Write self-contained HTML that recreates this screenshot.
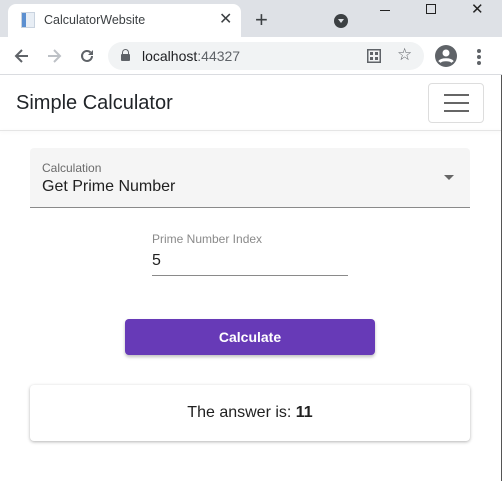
<!DOCTYPE html>
<html><head><style>
*{box-sizing:border-box;margin:0;padding:0}
body{width:502px;height:481px;overflow:hidden;background:#fff;font-family:"Liberation Sans",sans-serif;position:relative}
.a{position:absolute}
</style></head><body>
<div class="a" style="left:0;top:0;width:502px;height:37px;background:#dee1e6"></div>
<div class="a" style="left:8px;top:4px;width:233px;height:34px;background:#fff;border-radius:8px 8px 0 0"></div>
<div class="a" style="left:21px;top:12px;width:14px;height:16px;background:#e8eef5;border:1px solid #c9d3df"><div style="width:4px;height:14px;background:#5b8fd0"></div></div>
<div class="a" style="left:44px;top:13px;font-size:12.5px;color:#3c4043">CalculatorWebsite</div>
<div class="a" style="left:219px;top:9px;font-size:16px;color:#3c4043">✕</div>
<div class="a" style="left:255px;top:7px;font-size:22px;color:#3c4043">+</div>
<div class="a" style="left:334px;top:14px;width:14px;height:14px;border-radius:50%;background:#3c4043"></div>
<div class="a" style="left:338px;top:19px;width:0;height:0;border-left:3px solid transparent;border-right:3px solid transparent;border-top:4px solid #dee1e6"></div>
<div class="a" style="left:380px;top:10px;width:10px;height:1px;background:#222"></div>
<div class="a" style="left:426px;top:4px;width:10px;height:10px;border:1px solid #222"></div>
<div class="a" style="left:471px;top:0px;font-size:15px;color:#222">✕</div>
<div class="a" style="left:0;top:37px;width:502px;height:37px;background:#fff"></div>
<svg class="a" style="left:12px;top:46px" width="20" height="20" viewBox="0 0 20 20"><path d="M16 10H4M10 4L4 10l6 6" stroke="#5f6368" stroke-width="2" fill="none"/></svg>
<svg class="a" style="left:44px;top:46px" width="20" height="20" viewBox="0 0 20 20"><path d="M4 10h12M10 4l6 6-6 6" stroke="#bdc1c6" stroke-width="2" fill="none"/></svg>
<svg class="a" style="left:77px;top:46px" width="20" height="20" viewBox="0 0 20 20"><path d="M15 10a5 5 0 1 1-1.5-3.6" stroke="#5f6368" stroke-width="2" fill="none"/><path d="M16 4v5h-5z" fill="#5f6368"/></svg>
<div class="a" style="left:108px;top:42px;width:316px;height:28px;background:#f1f3f4;border-radius:14px"></div>
<div class="a" style="left:121px;top:54px;width:9px;height:7px;background:#5f6368;border-radius:1px"></div>
<div class="a" style="left:122px;top:49px;width:7px;height:7px;border:1.5px solid #5f6368;border-radius:4px 4px 0 0;border-bottom:none"></div>
<div class="a" style="left:142px;top:48px;font-size:14px;color:#202124">localhost<span style="color:#5f6368">:44327</span></div>
<svg class="a" style="left:367px;top:49px" width="14" height="14" viewBox="0 0 14 14"><rect x="0.75" y="0.75" width="12.5" height="12.5" fill="none" stroke="#5f6368" stroke-width="1.5"/><rect x="3" y="3" width="3" height="3" fill="#5f6368"/><rect x="8" y="3" width="3" height="3" fill="#5f6368"/><rect x="3" y="8" width="3" height="3" fill="#5f6368"/><rect x="8" y="8" width="3" height="3" fill="#5f6368"/></svg>
<div class="a" style="left:397px;top:45px;font-size:17px;color:#5f6368">☆</div>
<svg class="a" style="left:435px;top:45px" width="22" height="22" viewBox="0 0 22 22"><circle cx="11" cy="11" r="11" fill="#5f6368"/><circle cx="11" cy="8" r="3.5" fill="#fff"/><path d="M4.5 17c2-3 11-3 13 0" stroke="#fff" stroke-width="3" fill="none"/></svg>
<div class="a" style="left:477px;top:49px;width:4px;height:4px;border-radius:50%;background:#5f6368;box-shadow:0 6px 0 #5f6368,0 12px 0 #5f6368"></div>
<div class="a" style="left:0;top:74px;width:502px;height:1px;background:#dadce0"></div>
<div class="a" style="left:0;top:130px;width:502px;height:1px;background:#e5e5e5;box-shadow:0 1px 3px rgba(0,0,0,.08)"></div>
<div class="a" style="left:16px;top:92px;font-size:20px;color:#212529">Simple Calculator</div>
<div class="a" style="left:428px;top:83px;width:56px;height:40px;border:1px solid #ddd;border-radius:4px"></div>
<div class="a" style="left:444px;top:94px;width:25px;height:2px;background:#666;box-shadow:0 8px 0 #666,0 16px 0 #666"></div>
<div class="a" style="left:501px;top:75px;width:1px;height:406px;background:#555"></div>
<div class="a" style="left:30px;top:148px;width:440px;height:60px;background:#f5f5f5;border-radius:4px 4px 0 0;border-bottom:1px solid #8a8a8a"></div>
<div class="a" style="left:42px;top:161px;font-size:12px;color:#6b6b6b">Calculation</div>
<div class="a" style="left:42px;top:178px;font-size:16px;color:#212121">Get Prime Number</div>
<div class="a" style="left:444px;top:175px;width:0;height:0;border-left:5px solid transparent;border-right:5px solid transparent;border-top:5px solid #666"></div>
<div class="a" style="left:152px;top:232px;font-size:12px;color:#8a8a8a">Prime Number Index</div>
<div class="a" style="left:152px;top:252px;font-size:16px;color:#212121">5</div>
<div class="a" style="left:152px;top:275px;width:196px;height:1px;background:#8a8a8a"></div>
<div class="a" style="left:125px;top:319px;width:250px;height:36px;background:#673ab7;border-radius:4px;box-shadow:0 2px 3px rgba(0,0,0,.25);color:#fff;font-weight:bold;font-size:14px;text-align:center;line-height:36px">Calculate</div>
<div class="a" style="left:30px;top:385px;width:440px;height:56px;background:#fff;border-radius:4px;box-shadow:0 1px 3px rgba(0,0,0,.3);text-align:center;line-height:56px;font-size:16px;color:#212121">The answer is: <b>11</b></div>
</body></html>
